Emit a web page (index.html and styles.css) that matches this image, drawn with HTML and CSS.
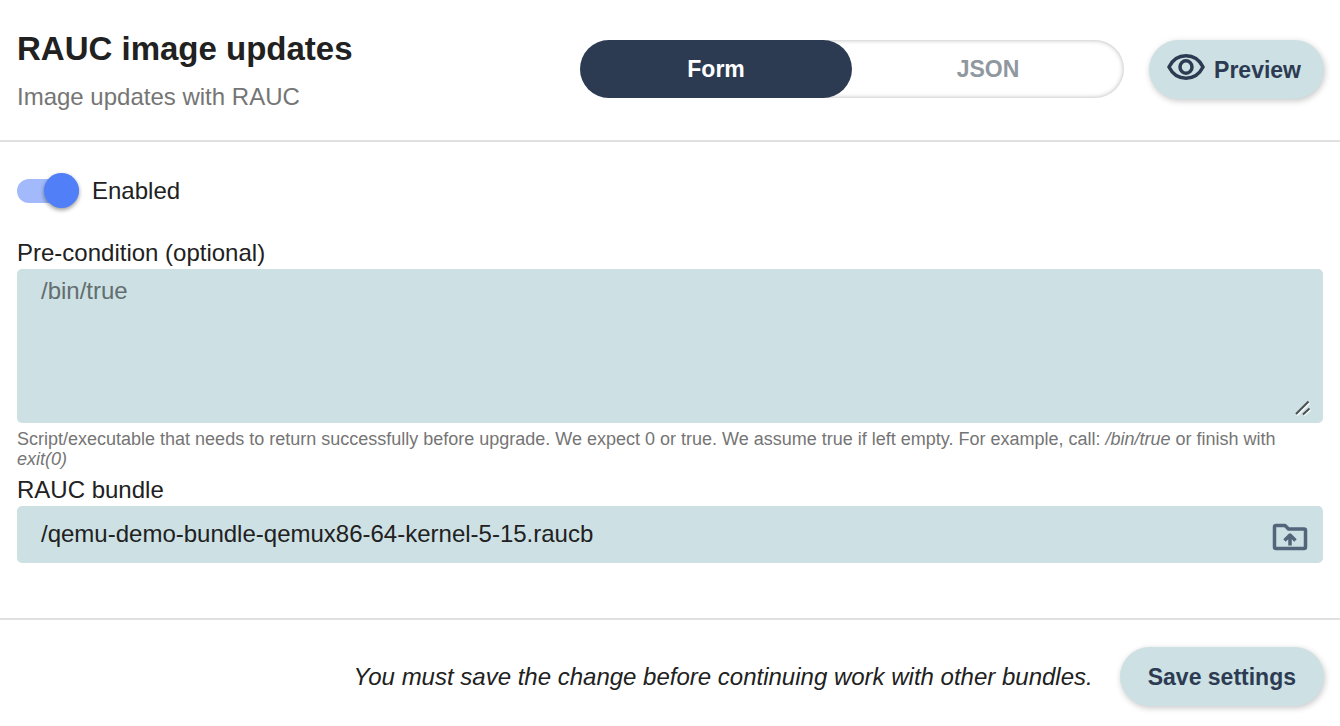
FILE: index.html
```html
<!DOCTYPE html>
<html lang="en">
  <head>
    <meta charset="utf-8">
    <title>RAUC image updates</title>
    <link rel="stylesheet" href="styles.css">
  </head>
  <body>
    <form class="panel">
      <header class="panel-header">
        <div class="heading">
          <h1>RAUC image updates</h1>
          <p>Image updates with RAUC</p>
        </div>
        <div class="tabs">
          <button type="button" class="tab active">Form</button>
          <button type="button" class="tab">JSON</button>
        </div>
        <button type="button" class="btn btn-preview">
          <svg class="icon-eye" viewBox="0 0 38 28" aria-hidden="true">
            <path d="M2 14C6 6 12 2.800 19 2.800S32 6 36 14C32 22 26 25.200 19 25.200S6 22 2 14Z"/>
            <ellipse cx="19" cy="14" rx="6" ry="6.200"/>
          </svg>
          <span>Preview</span>
        </button>
      </header>

      <main class="panel-body">
        <label class="switch">
          <input type="checkbox" checked>
          <span>Enabled</span>
        </label>

        <div class="field">
          <label for="pre-condition">Pre-condition (optional)</label>
          <div class="control">
            <textarea id="pre-condition" placeholder="/bin/true"></textarea>
            <svg class="grip" viewBox="0 0 16 16" aria-hidden="true">
              <path class="grip-light" d="M2 15.500L14.500 3M9 15.500L15.500 9.500"/>
              <path d="M1 14L13.500 1.500M8 14.500L14.500 8.500"/>
            </svg>
          </div>
          <p class="help">Script/executable that needs to return successfully before upgrade. We expect 0 or true. We assume true if left empty. For example, call: <em>/bin/true</em> or finish with <em>exit(0)</em></p>
        </div>

        <div class="field">
          <label for="bundle">RAUC bundle</label>
          <div class="control">
            <input type="text" id="bundle" value="/qemu-demo-bundle-qemux86-64-kernel-5-15.raucb">
            <button type="button" class="btn-upload" aria-label="Choose bundle">
              <svg viewBox="0 0 36 28" aria-hidden="true">
                <path d="M4 2.500H13L16.500 6H32Q33.500 6 33.500 7.500V24Q33.500 25.500 32 25.500H4Q2.500 25.500 2.500 24V4Q2.500 2.500 4 2.500Z"/>
                <path d="M18 22.500V12M12.500 17.500L18 12L23.500 17.500"/>
              </svg>
            </button>
          </div>
        </div>
      </main>

      <footer class="panel-footer">
        <em>You must save the change before continuing work with other bundles.</em>
        <button type="submit" class="btn">Save settings</button>
      </footer>
    </form>
  </body>
</html>
```
FILE: styles.css
```css
* {
  box-sizing: border-box;
}
body {
  margin: 0;
  background-color: #fff;
  color: #212121;
  font-family: "Liberation Sans", Arial, sans-serif;
  font-size: 24px;
  line-height: 28px;
}
h1, p {
  margin: 0;
}
button, input, textarea {
  font: inherit;
}
button {
  border: 0;
  cursor: pointer;
}
.panel-header {
  display: flex;
  align-items: flex-start;
  padding: 28px 16px 29px 17px;
  border-bottom: 2px solid #e0e0e0;
}
.heading {
  flex: 1;
}
.heading h1 {
  font-size: 33px;
  line-height: 42px;
}
.heading p {
  margin-top: 13px;
  color: #757575;
}
.tabs {
  display: flex;
  flex: 0 1 544px;
  margin: 12px 25px 0 0;
  border-radius: 29px;
  box-shadow: inset 0 0 5px rgba(0, 0, 0, 0.3);
}
.tab {
  flex: 1;
  height: 58px;
  border-radius: 29px;
  background: none;
  color: #90989f;
  font-size: 23px;
  font-weight: bold;
}
.tab.active {
  background-color: #2c3b52;
  color: #fff;
}
.btn {
  height: 59px;
  padding: 0 28px;
  border-radius: 30px;
  background-color: #cde0e3;
  box-shadow: 1px 2px 6px rgba(0, 0, 0, 0.22);
  color: #2c3b52;
  font-size: 23px;
  font-weight: bold;
}
.btn-preview {
  display: flex;
  align-items: center;
  gap: 9px;
  margin-top: 12px;
  padding: 0 23px 0 18px;
}
.icon-eye {
  width: 38px;
  height: 28px;
  margin-bottom: 5px;
  fill: none;
  stroke: #2c3b52;
  stroke-width: 3.5;
}
.panel-body {
  padding: 31px 17px 55px;
}
.switch {
  display: inline-flex;
  align-items: center;
  gap: 13px;
  height: 35px;
  margin-bottom: 31px;
}
/* the input is the track, the knob overflows it */
.switch input {
  display: flex;
  align-items: center;
  justify-content: flex-end;
  appearance: none;
  width: 62px;
  height: 24px;
  margin: 0;
  border-radius: 12px;
  background-color: #a2bafb;
}
.switch input::before {
  content: "";
  flex: none;
  width: 35px;
  height: 35px;
  border-radius: 50%;
  background-color: #507ff8;
  box-shadow: 0 2px 4px rgba(0, 0, 0, 0.4);
}
.field > label {
  display: block;
  margin-bottom: 2px;
}
.control {
  position: relative;
}
.control textarea,
.control input {
  display: block;
  width: 100%;
  border: 0;
  border-radius: 5px;
  background-color: #cde0e3;
  color: #212121;
}
.control textarea {
  height: 154px;
  padding: 8px 24px;
  resize: none;
}
.control textarea::placeholder {
  color: #626e6f;
}
.grip {
  position: absolute;
  right: 12px;
  bottom: 7px;
  width: 16px;
  height: 16px;
  fill: none;
  stroke: #4c5253;
  stroke-width: 2;
  pointer-events: none;
}
.grip .grip-light {
  stroke: #f4f8f8;
}
.help {
  margin: 6px 0 7px;
  color: #757575;
  font-size: 18px;
  line-height: 20px;
}
.control input {
  height: 57px;
  padding: 0 64px 2px 24px;
}
.btn-upload {
  position: absolute;
  top: 17px;
  right: 15px;
  width: 36px;
  height: 28px;
  padding: 0;
  background: none;
}
.btn-upload svg {
  display: block;
  fill: none;
  stroke: #52657a;
  stroke-width: 3.5;
  stroke-linejoin: round;
}
.panel-footer {
  display: flex;
  align-items: center;
  justify-content: flex-end;
  gap: 27px;
  padding: 27px 16px 20px;
  border-top: 2px solid #e0e0e0;
}
```
